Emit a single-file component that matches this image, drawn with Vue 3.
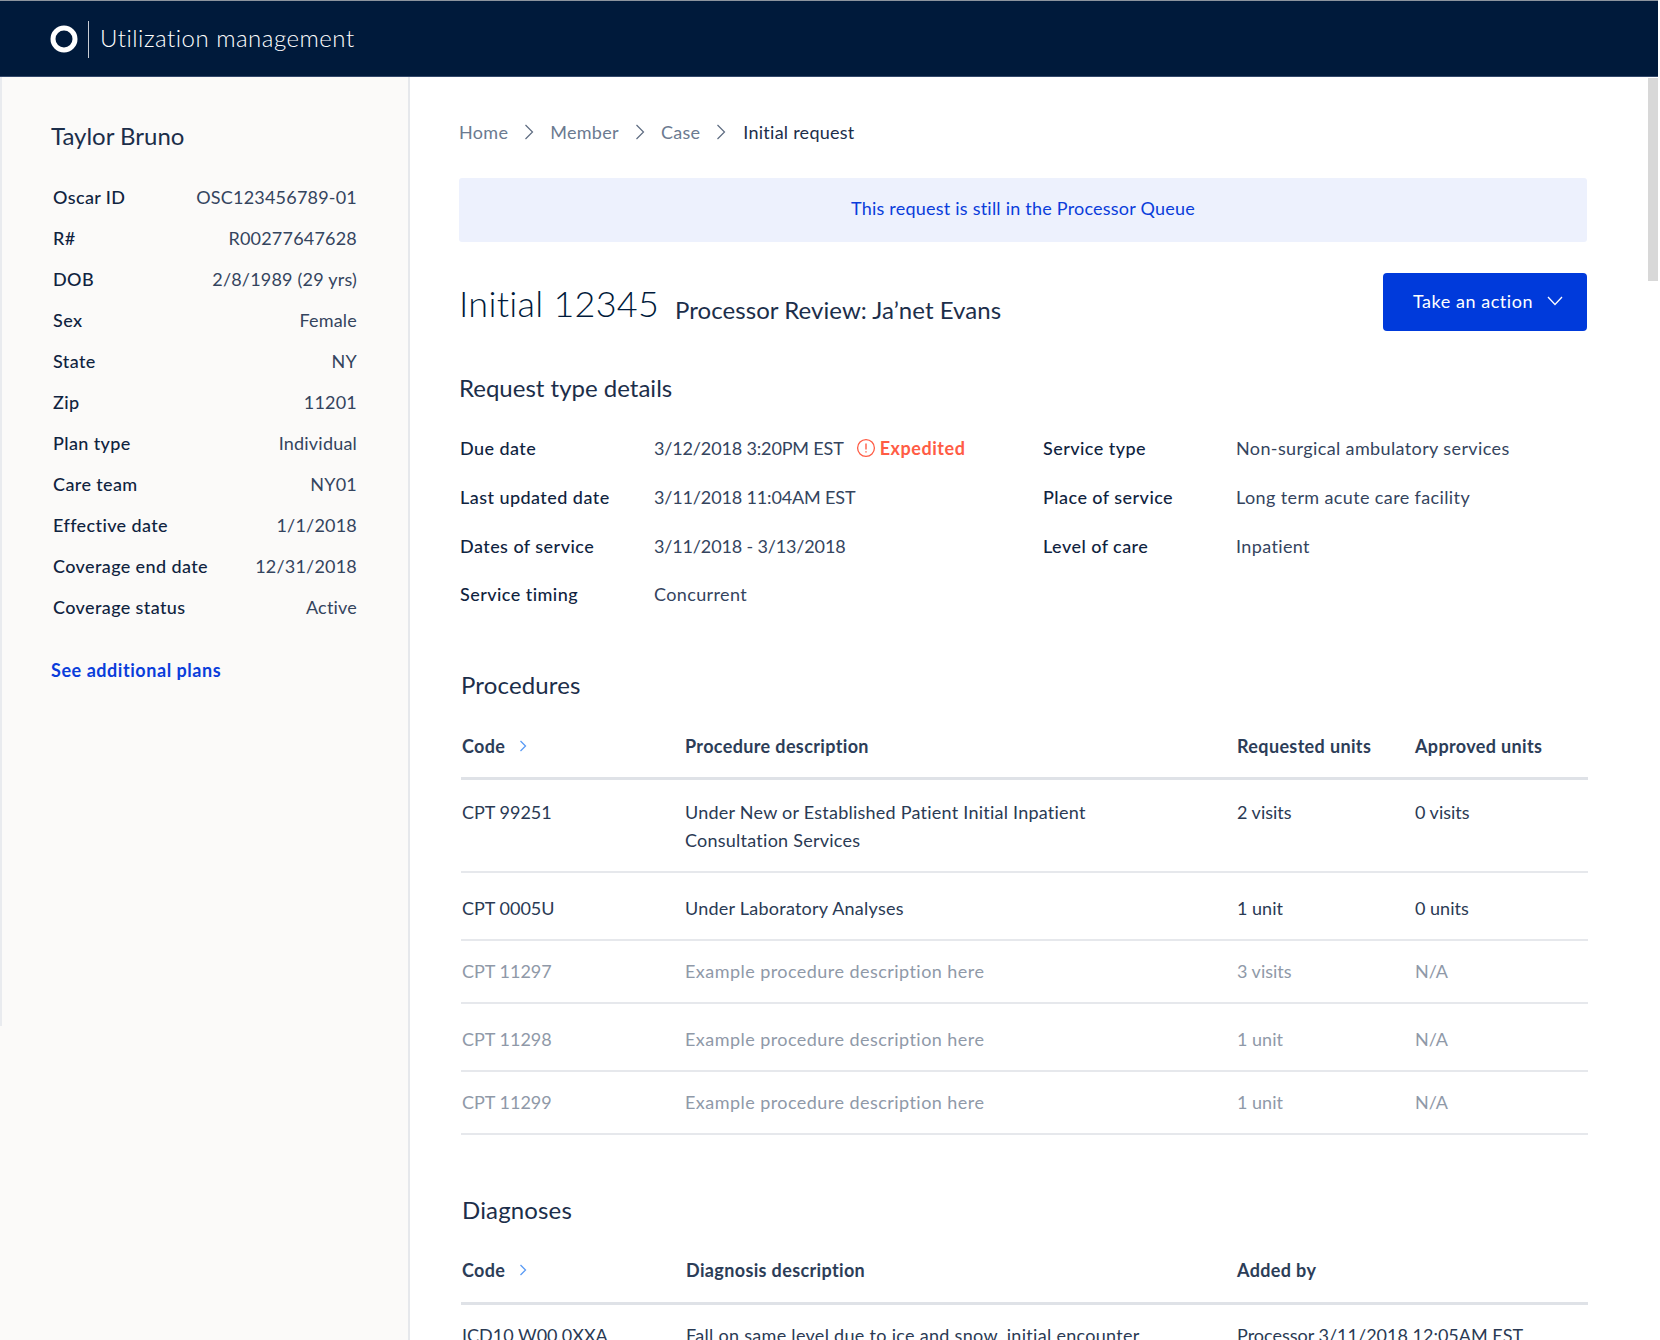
<script setup>
const facts = [
  ['Oscar ID', 'OSC123456789-01'], ['R#', 'R00277647628'], ['DOB', '2/8/1989 (29 yrs)'],
  ['Sex', 'Female'], ['State', 'NY'], ['Zip', '11201'], ['Plan type', 'Individual'],
  ['Care team', 'NY01'], ['Effective date', '1/1/2018'], ['Coverage end date', '12/31/2018'], ['Coverage status', 'Active'],
]
const crumbs = ['Home', 'Member', 'Case']
const detailsRight = [
  ['Service type', 'Non-surgical ambulatory services'],
  ['Place of service', 'Long term acute care facility'],
  ['Level of care', 'Inpatient'],
]
const detailsLeft = [
  ['Last updated date', '3/11/2018 11:04AM EST', 'val-date'],
  ['Dates of service', '3/11/2018 - 3/13/2018', 'val-date'],
  ['Service timing', 'Concurrent', ''],
]
const procedures = [
  { code: 'CPT 99251', desc: 'Under New or Established Patient Initial Inpatient Consultation Services', req: '2 visits', app: '0 visits', cls: 'r-double' },
  { code: 'CPT 0005U', desc: 'Under Laboratory Analyses', req: '1 unit', app: '0 units', cls: 'r-tall' },
  { code: 'CPT 11297', desc: 'Example procedure description here', req: '3 visits', app: 'N/A', cls: 'r-short muted' },
  { code: 'CPT 11298', desc: 'Example procedure description here', req: '1 unit', app: 'N/A', cls: 'r-tall muted' },
  { code: 'CPT 11299', desc: 'Example procedure description here', req: '1 unit', app: 'N/A', cls: 'r-short muted' },
]
</script>

<template>
  <div class="page">
    <header class="topbar">
      <svg class="logo" width="28" height="28" viewBox="0 0 28 28"><circle cx="14" cy="14" r="11" fill="none" stroke="#fff" stroke-width="5" /></svg>
      <span class="topbar-rule"></span>
      <span class="topbar-title">Utilization management</span>
    </header>
    <div class="body">
      <aside class="side">
        <h2 class="side-name">Taylor Bruno</h2>
        <dl class="facts">
          <div v-for="f in facts" :key="f[0]" class="fact">
            <dt>{{ f[0] }}</dt>
            <dd>{{ f[1] }}</dd>
          </div>
        </dl>
        <a class="more">See additional plans</a>
      </aside>
      <main class="main">
        <nav class="crumbs">
          <template v-for="c in crumbs" :key="c">
            <span class="crumb">{{ c }}</span>
            <svg class="crumb-sep" width="10" height="16" viewBox="0 0 10 16"><path d="M1.5 1 L8.5 8 L1.5 15" fill="none" stroke="#5d6b80" stroke-width="1.2" /></svg>
          </template>
          <span class="crumb-now">Initial request</span>
        </nav>
        <div class="alert">This request is still in the Processor Queue</div>
        <div class="title-row">
          <h1 class="title">Initial 12345</h1>
          <span class="subtitle">Processor Review: Ja’net Evans</span>
          <button class="action">
            <span class="action-text">Take an action</span>
            <svg width="16" height="10" viewBox="0 0 16 10"><path d="M1 1 L8 8.5 L15 1" fill="none" stroke="#fff" stroke-width="1.3" /></svg>
          </button>
        </div>
        <h3 class="sec sec-details">Request type details</h3>
        <div class="details">
          <div class="col">
            <div class="row">
              <span class="lab lab-l">Due date</span>
              <span class="val val-date">3/12/2018 3:20PM EST</span>
              <span class="exp">
                <svg width="20" height="20" viewBox="0 0 20 20"><circle cx="10" cy="10" r="8.4" fill="none" stroke="#ff5c45" stroke-width="1.3" /><path d="M10 5.5 V11.5 M10 13.2 V14.6" stroke="#ff5c45" stroke-width="1.4" fill="none" /></svg>
                Expedited
              </span>
            </div>
            <div v-for="d in detailsLeft" :key="d[0]" class="row">
              <span class="lab lab-l">{{ d[0] }}</span>
              <span class="val" :class="d[2]">{{ d[1] }}</span>
            </div>
          </div>
          <div class="col col-r">
            <div v-for="d in detailsRight" :key="d[0]" class="row">
              <span class="lab lab-r">{{ d[0] }}</span>
              <span class="val">{{ d[1] }}</span>
            </div>
          </div>
        </div>
        <h3 class="sec sec-proc">Procedures</h3>
        <div class="thead">
          <span class="th-code">Code
            <svg width="8" height="14" viewBox="0 0 8 14"><path d="M1.5 2 L6.5 7 L1.5 12" fill="none" stroke="#5a9bf5" stroke-width="1.3" /></svg>
          </span>
          <span>Procedure description</span>
          <span>Requested units</span>
          <span>Approved units</span>
        </div>
        <div v-for="p in procedures" :key="p.code" class="trow" :class="p.cls">
          <span class="cell">{{ p.code }}</span>
          <span class="desc">{{ p.desc }}</span>
          <span class="cell">{{ p.req }}</span>
          <span class="cell">{{ p.app }}</span>
        </div>
        <h3 class="sec sec-diag">Diagnoses</h3>
        <div class="thead thead-diag">
          <span class="th-code">Code
            <svg width="8" height="14" viewBox="0 0 8 14"><path d="M1.5 2 L6.5 7 L1.5 12" fill="none" stroke="#5a9bf5" stroke-width="1.3" /></svg>
          </span>
          <span>Diagnosis description</span>
          <span>Added by</span>
        </div>
        <div class="trow grid-diag r-diag">
          <span class="cell">ICD10 W00.0XXA</span>
          <span class="cell diag-desc">Fall on same level due to ice and snow, initial encounter</span>
          <span class="cell">Processor 3/11/2018 12:05AM EST</span>
        </div>
      </main>
    </div>
    <div class="scroll-thumb"></div>
  </div>
</template>

<style>
html, body { margin: 0; background: #fff; overflow: hidden; }
</style>

<style scoped>
.page { position: relative; width: 1660px; height: 1340px; overflow: hidden; font-family: Lato, "Noto Sans", sans-serif; color: #1c2e4a; font-size: 18px; letter-spacing: 0.3px; }
.topbar { box-sizing: border-box; width: 1658px; height: 77px; background: #001a3b; border-top: 1px solid #8c949e; border-bottom: 1px solid #33486a; display: flex; align-items: center; padding-left: 50px; }
.logo { margin-top: 1px; }
.topbar-rule { width: 1px; height: 37px; background: #c8cdd5; margin-left: 10px; margin-top: 2px; }
.topbar-title { color: #fff; font-size: 24px; font-weight: 300; letter-spacing: 0.5px; margin-left: 11px; margin-top: -2px; }
.body { display: flex; height: 1263px; }
.side { position: relative; box-sizing: border-box; width: 410px; flex: none; background: #fbfaf9; border-right: 2px solid #e6e8ec; padding: 42px 51px 0 52px; }
.side::before { content: ""; position: absolute; left: 0; top: 0; width: 2px; height: 949px; background: #e9ebef; }
.side-name { margin: 0 0 0 -1px; font-size: 24px; font-weight: 400; line-height: 34px; letter-spacing: 0; height: 34px; }
.facts { margin: 23px 0 0 1px; }
.fact { display: flex; justify-content: space-between; height: 41px; align-items: center; }
.fact dt { font-weight: 500; color: #0f2340; letter-spacing: 0.38px; }
.fact dd { margin: 0; color: #34445e; letter-spacing: 0.2px; }
.more { display: block; margin: 31px 0 0 -1px; color: #0a3ddb; font-weight: 700; line-height: 24px; letter-spacing: 0.55px; }
.main { flex: 1; min-width: 0; padding: 43px 73px 0 49px; box-sizing: border-box; }
.crumbs { display: flex; align-items: center; height: 24px; color: #6b7a90; }
.crumb-sep { margin: 0 16px; }
.crumb-now { color: #1c2e4a; letter-spacing: 0.25px; margin-left: 1px; }
.alert { margin-top: 34px; height: 64px; width: 1128px; box-sizing: border-box; padding-bottom: 4px; background: #edf1fd; border-radius: 3px; display: flex; align-items: center; justify-content: center; color: #0a3ddb; letter-spacing: 0.22px; }
.title-row { display: flex; align-items: center; margin-top: 31px; height: 58px; width: 1128px; }
.title { margin: 2px 0 0; font-size: 36px; font-weight: 300; letter-spacing: 0.25px; line-height: 44px; color: #001a3b; }
.subtitle { font-size: 24px; margin-left: 16px; margin-top: 15px; letter-spacing: 0.05px; }
.action { margin-left: auto; width: 204px; height: 58px; border: 0; background: #003adb; color: #fff; border-radius: 4px; font: inherit; letter-spacing: 0.55px; display: flex; align-items: center; justify-content: center; gap: 14px; padding: 0 0 2px 6px; }
.sec { margin: 0; font-size: 24px; font-weight: 400; letter-spacing: 0; line-height: 32px; }
.sec-details { margin-top: 41px; }
.details { display: flex; margin-top: 20px; margin-left: 1px; }
.col { width: 583px; flex: none; }
.row { display: flex; align-items: center; height: 48.7px; }
.lab { font-weight: 500; color: #0f2340; letter-spacing: 0.45px; }
.lab-l { width: 194px; flex: none; }
.lab-r { width: 193px; flex: none; }
.val { color: #34445e; letter-spacing: 0.38px; }
.val-date { letter-spacing: -0.15px; }
.exp { margin-left: 12px; color: #ff5c45; font-weight: 700; letter-spacing: 0.55px; display: inline-flex; align-items: center; gap: 4px; }
.sec-proc { margin: 50px 0 0 2px; letter-spacing: 0.15px; }
.thead, .trow { display: grid; grid-template-columns: 224px 552px 178px 1fr; margin-left: 2px; width: 1127px; box-sizing: border-box; }
.thead { font-weight: 700; color: #2c3d58; align-items: center; margin-top: 22px; height: 57px; border-bottom: 3px solid #dfe2e7; padding-bottom: 8px; letter-spacing: 0.36px; }
.thead-diag { grid-template-columns: 225px 551px 1fr; margin-top: 21px; height: 58px; padding-bottom: 9px; }
.grid-diag { grid-template-columns: 225px 551px 1fr; }
.th-code { display: inline-flex; align-items: center; gap: 14px; padding-left: 1px; }
.trow { color: #2a3a54; border-bottom: 2px solid #e6e8ec; }
.cell { letter-spacing: 0; }
.trow .cell:first-child { padding-left: 1px; }
.desc { max-width: 440px; letter-spacing: 0.24px; }
.diag-desc { letter-spacing: 0.3px; }
.muted .desc { letter-spacing: 0.45px; }
.r-double { line-height: 28px; height: 93px; padding-top: 18px; }
.r-tall { height: 68px; align-items: center; padding-top: 4px; }
.r-short { height: 63px; align-items: center; padding-bottom: 1px; }
.muted { color: #8f99a8; }
.sec-diag { margin: 59px 0 0 3px; letter-spacing: 0.15px; }
.r-diag { padding-top: 19px; border: 0; }
.scroll-thumb { position: absolute; left: 1648px; top: 78px; width: 10px; height: 203px; background: #d8d8d8; }
</style>
